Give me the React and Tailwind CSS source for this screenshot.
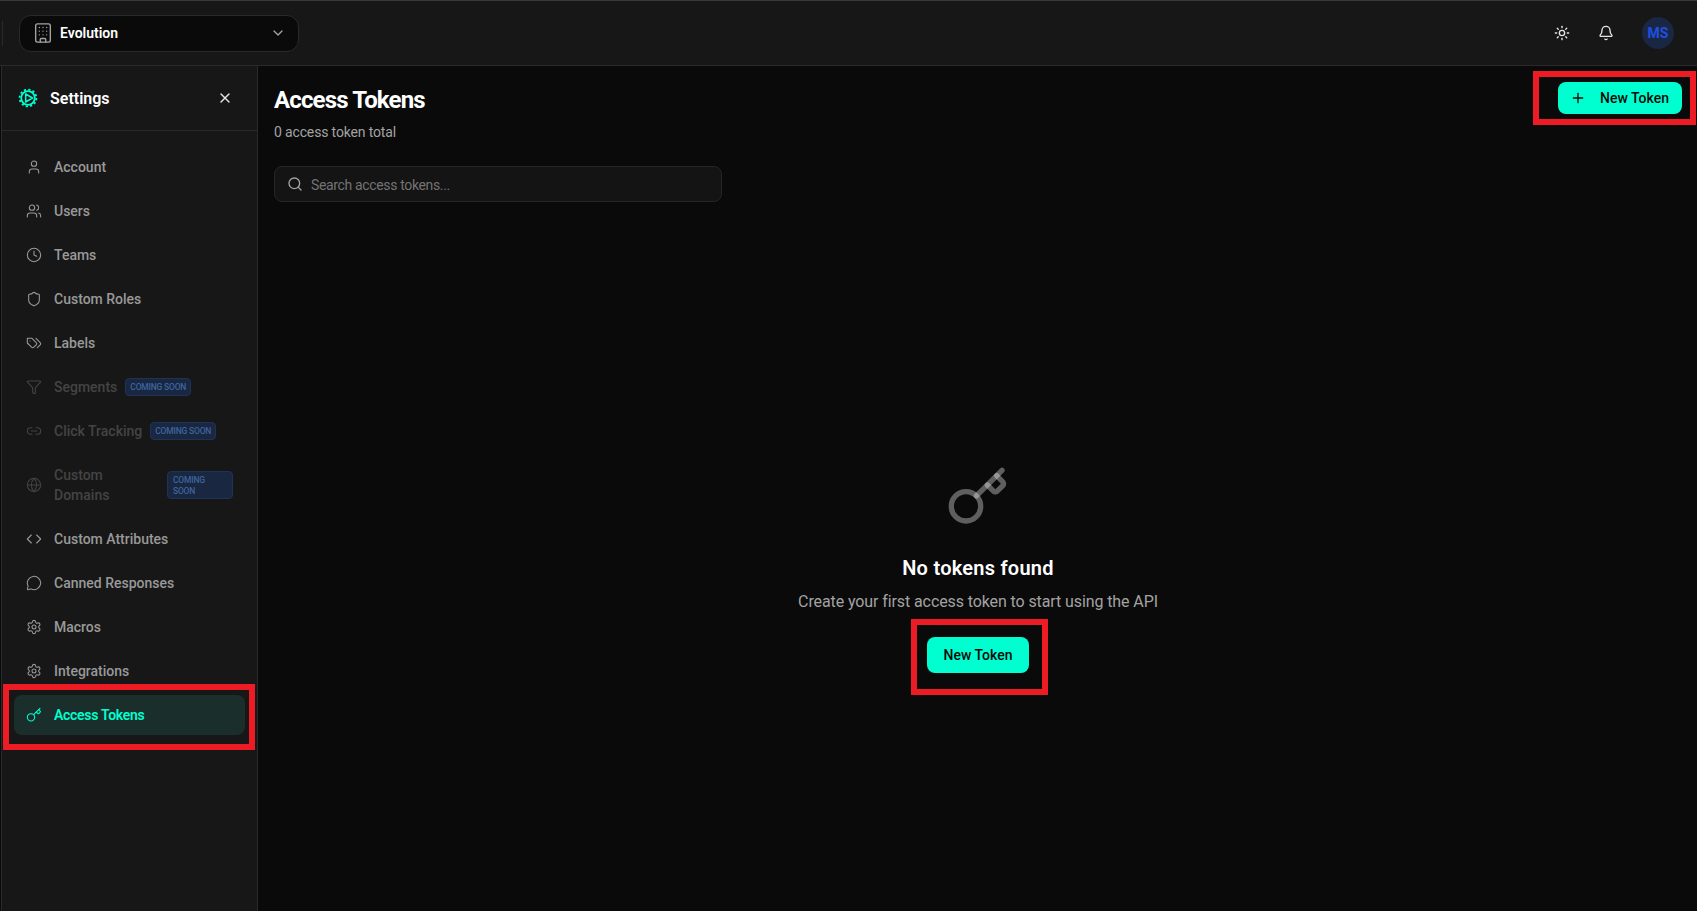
import React from "react";
import { User, Users, Clock, Shield, Funnel, Link2, Globe, Code, MessageCircle, Settings, Key, X, Search, Sun, Bell, Plus, ChevronDown, Building } from "lucide-react";

function TagsIcon({ size = 16, strokeWidth = 2, className = "" }) {
  return (
    <svg width={size} height={size} viewBox="0 0 24 24" fill="none" stroke="currentColor" strokeWidth={strokeWidth} strokeLinecap="round" strokeLinejoin="round" className={className}>
      <path d="M9 5H2v7l6.29 6.29c.94.94 2.48.94 3.42 0l3.58-3.58c.94-.94.94-2.48 0-3.42L9 5Z" />
      <path d="M6 9.01V9" />
      <path d="m15 5 6.3 6.3a2.4 2.4 0 0 1 0 3.4L17 19" />
    </svg>
  );
}

const items = [
  { label: "Account", Icon: User },
  { label: "Users", Icon: Users },
  { label: "Teams", Icon: Clock },
  { label: "Custom Roles", Icon: Shield },
  { label: "Labels", Icon: TagsIcon },
  { label: "Segments", Icon: Funnel, soon: true },
  { label: "Click Tracking", Icon: Link2, soon: true },
  { label: "Custom Domains", Icon: Globe, soon: true, wrap: true },
  { label: "Custom Attributes", Icon: Code },
  { label: "Canned Responses", Icon: MessageCircle },
  { label: "Macros", Icon: Settings },
  { label: "Integrations", Icon: Settings },
  { label: "Access Tokens", Icon: Key, active: true },
];

function GearPlay() {
  return (
    <svg width="20" height="20" viewBox="0 0 20 20" fill="none" stroke="#00ffd0" strokeWidth="1.8" strokeLinejoin="round">
      <circle cx="10" cy="10" r="6.8" />
      <circle cx="10" cy="10" r="8.4" strokeWidth="1.8" strokeDasharray="2.2 2.2" />
      <path d="M7.7 6 14.5 10l-6.8 4z" strokeWidth="1.5" />
    </svg>
  );
}

function NavItem({ label, Icon, soon, wrap, active }) {
  const base = "flex items-center gap-3 rounded-lg px-3 py-2.5 text-[14px] leading-5 font-medium";
  const tone = active
    ? "bg-[#1a2f2b] text-[#00ffd0] font-semibold tracking-[-0.3px]"
    : soon
      ? "text-[#444444]"
      : "text-[#999999]";
  return (
    <div className={`${base} ${tone}`}>
      <Icon size={16} strokeWidth={1.6} className="shrink-0" />
      <div className="flex min-w-0 flex-1 items-center gap-2">
        <span className={wrap ? "w-[105px] shrink-0" : "whitespace-nowrap"}>{label}</span>
        {soon && (
          <span
            className={
              wrap
                ? "w-[66px] shrink-0 rounded border border-[#1e3358] bg-[#1a2740] px-[5px] pt-[3px] pb-[1px] text-[8.5px] leading-[11px] font-medium tracking-[-0.2px] text-[#3d659f]"
                : "shrink-0 whitespace-nowrap rounded border border-[#1e3358] bg-[#1a2740] px-1 py-[2px] text-[8.5px] leading-3 font-medium tracking-[-0.2px] text-[#3d659f]"
            }
          >
            COMING SOON
          </span>
        )}
      </div>
    </div>
  );
}

export default function App() {
  return (
    <div
      className="relative flex h-[911px] w-[1697px] flex-col overflow-hidden bg-[#0a0a0a] text-white"
      style={{ fontFamily: 'Roboto, sans-serif' }}
    >
      <header className="flex h-[66px] shrink-0 items-center border-t border-b border-t-[#3a3a3a] border-b-[#2a2a2a] bg-[#171717] pr-[23px] pl-[2px]">
        <div className="h-[25px] w-px bg-[#2a2a2a]" />
        <div className="ml-4 flex h-[37px] w-[280px] items-center rounded-xl border border-[#2a2a2a] bg-[#0a0a0a] pr-3 pl-3">
          <Building size={22} strokeWidth={1.5} className="text-[#a3a3a3]" />
          <span className="ml-[6px] text-[14px] font-semibold text-white">Evolution</span>
          <ChevronDown size={16} className="ml-auto text-[#a3a3a3]" />
        </div>
        <div className="ml-auto flex items-center gap-1">
          <div className="flex h-10 w-10 items-center justify-center"><Sun size={16} className="text-[#e5e5e5]" /></div>
          <div className="flex h-10 w-10 items-center justify-center"><Bell size={16} className="text-[#e5e5e5]" /></div>
          <div className="ml-3 flex h-8 w-8 items-center justify-center rounded-full bg-[#1a2744] text-[14px] font-bold text-[#1f4fe0]">MS</div>
        </div>
      </header>

      <div className="flex min-h-0 flex-1">
        <aside className="ml-[1px] w-[257px] shrink-0 border-r border-l border-[#2a2a2a] bg-[#171717]">
          <div className="flex h-[65px] items-center border-b border-[#2a2a2a] pr-[24px] pl-[16px]">
            <GearPlay />
            <span className="ml-[12px] pt-[2px] text-[16px] font-semibold text-white">Settings</span>
            <X size={16} className="ml-auto text-[#e5e5e5]" />
          </div>
          <nav className="flex flex-col gap-1 px-3 pt-4">
            {items.map((it) => (
              <NavItem key={it.label} {...it} />
            ))}
          </nav>
        </aside>

        <main className="flex min-w-0 flex-1 flex-col pt-4 pr-[15px] pl-4">
          <div className="flex items-start justify-between">
            <div>
              <h1 className="mt-[2px] text-[24px] leading-8 font-bold tracking-[-0.85px] text-white">Access Tokens</h1>
              <p className="mt-[6px] text-[14px] leading-5 tracking-[-0.15px] text-[#a3a3a3]">0 access token total</p>
            </div>
            <button className="flex h-8 w-[124px] items-center gap-[14px] rounded-lg bg-[#00ffd0] px-3 text-[14px] font-medium whitespace-nowrap text-[#0a0a0a]">
              <Plus size={16} />
              New Token
            </button>
          </div>

          <div className="mt-6 flex h-9 w-[448px] items-center gap-2 rounded-lg border border-[#262626] bg-[#141414] px-3 text-[14px] text-[#737373]">
            <Search size={16} className="shrink-0 text-[#a3a3a3]" />
            <span className="pt-[2px] tracking-[-0.35px]">Search access tokens...</span>
          </div>

          <div className="mt-[263px] flex flex-col items-center">
            <Key size={64} strokeWidth={2} className="text-white/35" />
            <h2 className="mt-[25px] text-[20px] leading-7 font-semibold tracking-[0.25px] text-white">No tokens found</h2>
            <p className="mt-[8px] text-[16px] leading-6 tracking-[-0.1px] text-[#a3a3a3]">Create your first access token to start using the API</p>
            <button className="mt-[23px] h-9 w-[102px] rounded-lg bg-[#00ffd0] text-[14px] font-medium text-[#0a0a0a]">New Token</button>
          </div>
        </main>
      </div>

      <div className="pointer-events-none absolute top-[684px] left-[3px] h-[66px] w-[252px] border-[6px] border-[#ed1c24]" />
      <div className="pointer-events-none absolute top-[71px] left-[1533px] h-[54px] w-[163px] border-[6px] border-[#ed1c24]" />
      <div className="pointer-events-none absolute top-[619px] left-[911px] h-[76px] w-[137px] border-[6px] border-[#ed1c24]" />
    </div>
  );
}
